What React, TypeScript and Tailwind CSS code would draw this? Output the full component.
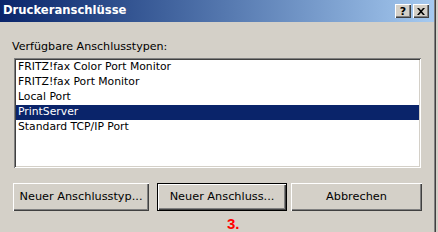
import React from "react";

const raised =
  "shadow-[inset_1px_1px_0_#ffffff,inset_-1px_-1px_0_#404040,inset_-2px_-2px_0_#808080]";

function Btn({ label, w, isDefault }: { label: string; w: string; isDefault?: boolean }) {
  return (
    <div
      className={`${w} h-[28px] flex items-center justify-center bg-[#d4d0c8] text-black text-[11.3px] ${
        isDefault ? "border border-black" : ""
      }`}
    >
      <div className={`w-full h-full flex items-center justify-center ${raised}`}>{label}</div>
    </div>
  );
}

export default function App() {
  const items = [
    "FRITZ!fax Color Port Monitor",
    "FRITZ!fax Port Monitor",
    "Local Port",
    "PrintServer",
    "Standard TCP/IP Port",
  ];
  return (
    <div
      className="w-[438px] h-[232px] bg-[#d4d0c8] flex overflow-hidden"
      style={{ fontFamily: '"DejaVu Sans", Tahoma, sans-serif' }}
    >
      <div className="w-[434px] h-full flex flex-col">
        <div className="h-[22px] flex items-center bg-gradient-to-r from-[#0a246a] to-[#a6caf0] pl-[3px] pr-[5px]">
          <span className="text-white font-bold text-[11.6px] flex-1 leading-none">Druckeranschlüsse</span>
          <div className={`w-[16px] h-[14px] bg-[#d4d0c8] ${raised} flex items-center justify-center text-[11px] font-bold leading-none`}>
            ?
          </div>
          <div className={`ml-[2px] w-[16px] h-[14px] bg-[#d4d0c8] ${raised} flex items-center justify-center`}>
            <svg width="8" height="7" viewBox="0 0 8 7">
              <path d="M0 0h2l2 2.2L6 0h2L5 3.5 8 7H6L4 4.8 2 7H0l3-3.5z" fill="#000" />
            </svg>
          </div>
        </div>
        <div className="pl-[12px] pt-[19px] h-[36px] text-[11.1px] leading-none text-black">
          Verfügbare Anschlusstypen:
        </div>
        <div className="ml-[14px] w-[407px] h-[110px] bg-white p-[2px] shadow-[inset_1px_1px_0_#808080,inset_-1px_-1px_0_#ffffff,inset_2px_2px_0_#404040,inset_-2px_-2px_0_#d4d0c8]">
          {items.map((it, i) => (
            <div
              key={it}
              className={`h-[15px] flex items-center pl-[2px] text-[10.8px] leading-none ${
                i === 3 ? "bg-[#0a246a] text-white" : "text-black"
              }`}
            >
              {it}
            </div>
          ))}
        </div>
        <div className="flex pt-[15px] pl-[13px]">
          <Btn label="Neuer Anschlusstyp..." w="w-[136px]" />
          <div className="ml-[8px]">
            <Btn label="Neuer Anschluss..." w="w-[130px]" isDefault />
          </div>
          <div className="ml-[4px]">
            <Btn label="Abbrechen" w="w-[131px]" />
          </div>
        </div>
        <div className="pl-[227px] pt-[5px] text-[15px] font-bold leading-none text-[#ff0000]" style={{ fontFamily: '"Liberation Sans", Arial, sans-serif' }}>
          3.
        </div>
      </div>
      <div className="w-[1px] h-full bg-[#808080]" />
      <div className="w-[1px] h-full bg-[#404040]" />
      <div className="w-[2px] h-full bg-[#d4d0c8]" />
    </div>
  );
}
